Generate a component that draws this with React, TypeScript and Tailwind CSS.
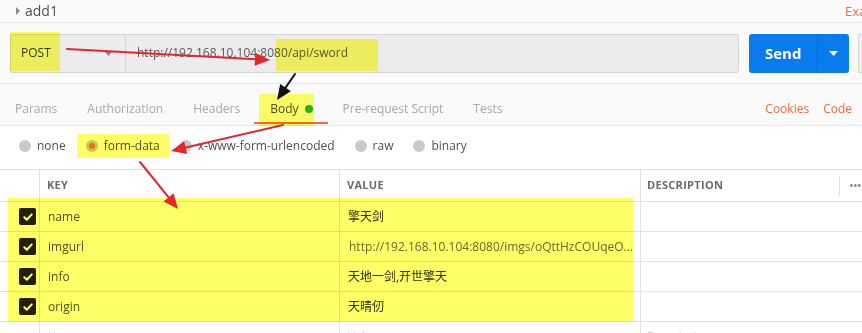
import React from "react";

function Arrow({ x1, y1, x2, y2, color }: { x1: number; y1: number; x2: number; y2: number; color: string }) {
  const dx = x2 - x1;
  const dy = y2 - y1;
  const len = Math.hypot(dx, dy);
  const ux = dx / len;
  const uy = dy / len;
  const hl = 15;
  const hw = 6.5;
  const bx = x2 - ux * hl;
  const by = y2 - uy * hl;
  const px = -uy;
  const py = ux;
  const pts = `${x2},${y2} ${bx + px * hw},${by + py * hw} ${bx - px * hw},${by - py * hw}`;
  return (
    <g>
      <line x1={x1} y1={y1} x2={bx + ux * 2} y2={by + uy * 2} stroke={color} strokeWidth={2} strokeLinecap="round" />
      <polygon points={pts} fill={color} />
    </g>
  );
}

function Check() {
  return (
    <div className="w-[17px] h-[17px] rounded-[2px] bg-[#231f1a] flex items-center justify-center">
      <svg width="12" height="12" viewBox="0 0 12 12">
        <path d="M2.3 6.2 L4.8 8.7 L9.8 3.4" stroke="#fff" strokeWidth="2" fill="none" strokeLinecap="round" strokeLinejoin="round" />
      </svg>
    </div>
  );
}

function Radio({ label, selected }: { label: string; selected?: boolean }) {
  return (
    <div className="flex items-center gap-[6px]">
      <div className="w-3 h-3 rounded-full bg-[#c9c9c9] flex items-center justify-center">
        {selected && <div className="w-[6px] h-[6px] rounded-full bg-[#f26b3a]" />}
      </div>
      <span className="text-[12px] text-[#505050] leading-none">{label}</span>
    </div>
  );
}

const rows = [
  { k: "name", v: "擎天剑", url: false },
  { k: "imgurl", v: "http://192.168.10.104:8080/imgs/oQttHzCOUqeO...", url: true },
  { k: "info", v: "天地一剑,开世擎天", url: false },
  { k: "origin", v: "天晴仞", url: false },
];

export default function App() {
  return (
    <div className="relative w-[862px] h-[333px] overflow-hidden bg-white font-['Open_Sans','Noto_Sans_CJK_SC',sans-serif]">
      {/* title row */}
      <div className="h-[23px] flex items-center bg-[#fafafa] border-b border-[#e6e6e6]">
        <svg width="6" height="8" viewBox="0 0 6 8" className="ml-[15px]">
          <path d="M1 0 L5 4 L1 8 Z" fill="#8a8a8a" />
        </svg>
        <span className="ml-[4px] text-[14px] text-[#505050] leading-none">add1</span>
        <div className="flex-1" />
        <div className="w-[17px] overflow-hidden whitespace-nowrap text-[13px] text-[#f26b3a] leading-none">Examples (0)</div>
      </div>

      {/* url row */}
      <div className="h-[61px] flex items-center bg-[#fafafa] border-b border-[#e6e6e6]">
        <div className="ml-[10px] w-[731px] h-[39px] flex bg-[#ececec] border border-[#d4d4d4] rounded-[2px]">
          <div className="w-[115px] flex items-center justify-between border-r border-[#d4d4d4] pl-[10px] pr-[12px]">
            <span className="text-[12px] text-[#3a3a3a]">POST</span>
            <svg width="9" height="5" viewBox="0 0 9 5">
              <path d="M0 0 L9 0 L4.5 5 Z" fill="#8a8a8a" />
            </svg>
          </div>
          <div className="flex items-center pl-[11px] text-[12px] text-[#5a5a5a]">http://192.168.10.104:8080/api/sword</div>
        </div>
        <div className="ml-[10px] w-[100px] h-[39px] rounded-[3px] bg-[#097bed] flex">
          <div className="w-[69px] flex items-center justify-center border-r border-[#0a6dd4]">
            <span className="text-[15px] font-bold text-white">Send</span>
          </div>
          <div className="flex-1 flex items-center justify-center">
            <svg width="9" height="5" viewBox="0 0 9 5">
              <path d="M0 0 L9 0 L4.5 5 Z" fill="#fff" />
            </svg>
          </div>
        </div>
        <div className="ml-[9px] w-[4px] h-[39px] border-l border-t border-b border-[#d4d4d4] rounded-l-[2px] bg-[#f0f0f0]" />
      </div>

      {/* tabs row */}
      <div className="h-[42px] flex items-center pt-[8px] bg-[#fafafa] border-b border-[#e6e6e6] text-[12px]">
        <div className="ml-[15px] flex items-center gap-[30px] text-[#a8a8a8]">
          <span>Params</span>
          <span>Authorization</span>
          <span>Headers</span>
          <span className="relative flex items-center gap-[6px] text-[#505050]">
            Body
            <span className="w-2 h-2 rounded-full bg-[#26b047]" />
            <span className="absolute left-[-16px] right-[-15px] top-[22px] h-[2px] bg-[#f26b3a]" />
          </span>
          <span>Pre-request Script</span>
          <span>Tests</span>
        </div>
        <div className="flex-1" />
        <div className="flex items-center gap-[14px] mr-[10px] text-[#f26b3a]">
          <span>Cookies</span>
          <span>Code</span>
        </div>
      </div>

      {/* radio row */}
      <div className="h-[42px] flex items-center gap-[20px] pl-[19px] pb-[3px]">
        <Radio label="none" />
        <Radio label="form-data" selected />
        <Radio label="x-www-form-urlencoded" />
        <Radio label="raw" />
        <Radio label="binary" />
      </div>

      {/* table */}
      <div className="mt-[1px] grid grid-cols-[40px_300px_301px_199px_22px] border-t border-[#e3e3e3]">
        <div className="h-[32px] border-b border-r border-[#e3e3e3]" />
        <div className="h-[32px] border-b border-r border-[#e3e3e3] flex items-center pl-[7px] text-[11px] font-bold text-[#6b6b6b] tracking-[0.3px]">KEY</div>
        <div className="h-[32px] border-b border-r border-[#e3e3e3] flex items-center pl-[7px] text-[11px] font-bold text-[#6b6b6b] tracking-[0.3px]">VALUE</div>
        <div className="h-[32px] border-b border-[#e3e3e3] flex items-center pl-[6px] text-[11px] font-bold text-[#6b6b6b] tracking-[0.3px]">
          <span className="flex-1">DESCRIPTION</span>
          <span className="w-px h-[20px] bg-[#e3e3e3]" />
        </div>
        <div className="h-[32px] border-b border-[#e3e3e3] flex items-center pl-[9px] text-[#8a8a8a] text-[13px] leading-none tracking-[-1px]">•••</div>

        {rows.map((r) => (
          <React.Fragment key={r.k}>
            <div className="h-[30px] border-b border-r border-[#e3e3e3] flex items-center justify-end pr-[3px]">
              <Check />
            </div>
            <div className="h-[30px] border-b border-r border-[#e3e3e3] flex items-center pl-[8px] text-[12px] text-[#505050]">{r.k}</div>
            <div
              className={
                r.url
                  ? "h-[30px] border-b border-r border-[#e3e3e3] flex items-center pl-[9px] text-[12px] text-[#6a6a6a] whitespace-nowrap overflow-hidden"
                  : "h-[30px] border-b border-r border-[#e3e3e3] flex items-center pl-[8px] text-[12px] text-[#303030]"
              }
            >
              {r.v}
            </div>
            <div className="h-[30px] border-b border-[#e3e3e3] col-span-2" />
          </React.Fragment>
        ))}
        <div className="h-[30px] border-r border-[#e3e3e3]" />
        <div className="h-[30px] border-r border-[#e3e3e3] flex items-center pl-[8px] text-[12px] text-[#c8c8c8]">Key</div>
        <div className="h-[30px] border-r border-[#e3e3e3] flex items-center pl-[8px] text-[12px] text-[#c8c8c8]">Value</div>
        <div className="h-[30px] col-span-2 flex items-center pl-[6px] text-[12px] text-[#c8c8c8]">Description</div>
      </div>

      {/* highlight annotations */}
      <div className="absolute left-[10px] top-[32px] w-[50px] h-[39px] bg-[#ffff00]/60 mix-blend-multiply pointer-events-none" />
      <div className="absolute left-[276px] top-[39px] w-[102px] h-[32px] bg-[#ffff00]/60 mix-blend-multiply pointer-events-none" />
      <div className="absolute left-[259px] top-[94px] w-[55px] h-[32px] bg-[#ffff00]/60 mix-blend-multiply pointer-events-none" />
      <div className="absolute left-[77px] top-[134px] w-[92px] h-[24px] bg-[#ffff00]/60 mix-blend-multiply pointer-events-none" />
      <div className="absolute left-[8px] top-[198px] w-[625px] h-[124px] bg-[#ffff00]/60 mix-blend-multiply pointer-events-none" />

      {/* arrows */}
      <svg className="absolute inset-0 pointer-events-none" width="862" height="333" viewBox="0 0 862 333">
        <Arrow x1={67} y1={49} x2={270} y2={60} color="#e5262a" />
        <Arrow x1={295} y1={74} x2={277} y2={100} color="#111111" />
        <Arrow x1={283} y1={125} x2={171} y2={151} color="#e5262a" />
        <Arrow x1={140} y1={162} x2={178} y2={209} color="#e5262a" />
      </svg>
    </div>
  );
}
